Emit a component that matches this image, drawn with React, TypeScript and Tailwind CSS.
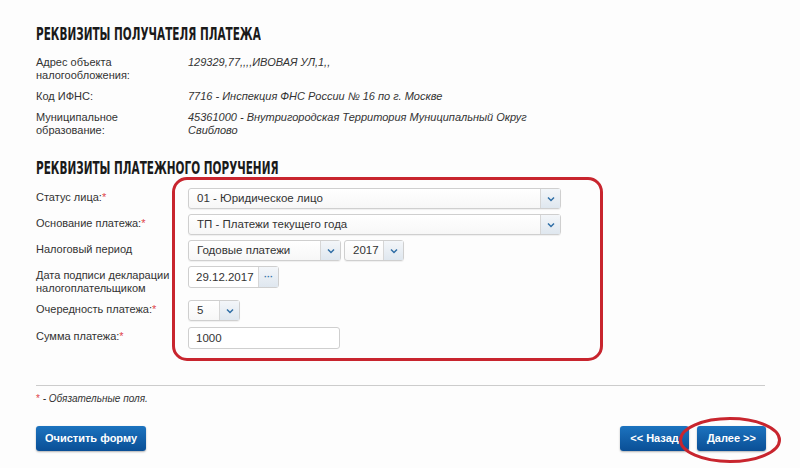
import React from 'react';

const font = { fontFamily: '"Liberation Sans", Arial, sans-serif' };

function Chevron() {
  return (
    <svg width="8" height="6" viewBox="0 0 8 6" fill="none">
      <path d="M1 1.5 L4 4.5 L7 1.5" stroke="#2f6ea6" strokeWidth="1.5" />
    </svg>
  );
}

function Select({ value, width }: { value: string; width: string }) {
  return (
    <div className={`flex h-[21px] ${width} rounded-[3px] border border-[#cfcfcf] bg-gradient-to-b from-white to-[#f7f7f7] shadow-[0_1px_1px_rgba(0,0,0,0.06)]`}>
      <div className="flex-1 truncate pl-[8px] text-[11.5px] leading-[19px] text-[#333]">{value}</div>
      <div className="flex w-[20px] items-center justify-center border-l border-[#d6d6d6] bg-gradient-to-b from-[#f3f6f9] to-[#dfe7ef]">
        <Chevron />
      </div>
    </div>
  );
}

function Label({ children, req }: { children: React.ReactNode; req?: boolean }) {
  return (
    <div className="w-[152px] shrink-0 pt-[3px] pr-2 text-[11px] leading-[13px] text-[#333]">
      {children}
      {req && <span className="text-[#e0454b]">*</span>}
    </div>
  );
}

function Heading({ children }: { children: React.ReactNode }) {
  return (
    <div className="h-[20px] overflow-visible">
      <div
        className="inline-block origin-left scale-x-[0.63] whitespace-nowrap text-[18.5px] font-bold leading-[20px] text-[#1a1a1a]"
        style={{ fontFamily: '"DejaVu Sans Condensed", "DejaVu Sans", sans-serif' }}
      >
        {children}
      </div>
    </div>
  );
}

function BlueButton({ children, width }: { children: React.ReactNode; width: string }) {
  return (
    <button className={`h-[25px] ${width} rounded-[3px] bg-gradient-to-b from-[#1c73bf] to-[#0a4f96] text-[11px] font-bold text-white shadow-[0_1px_2px_rgba(0,0,0,0.3)]`}>
      {children}
    </button>
  );
}

export default function App() {
  const recipient = [
    { label: 'Адрес объекта налогообложения:', value: '129329,77,,,,ИВОВАЯ УЛ,1,,' },
    { label: 'Код ИФНС:', value: '7716 - Инспекция ФНС России № 16 по г. Москве' },
    { label: 'Муниципальное образование:', value: '45361000 - Внутригородская Территория Муниципальный Округ Свиблово' },
  ];

  return (
    <div className="relative h-[468px] w-[800px] overflow-hidden bg-[#fdfdfd] px-[36px] pt-[23px]" style={font}>
      {/* Реквизиты получателя */}
      <Heading>РЕКВИЗИТЫ ПОЛУЧАТЕЛЯ ПЛАТЕЖА</Heading>
      <div className="mt-[13px] space-y-[8px]">
        {recipient.map((r) => (
          <div key={r.label} className="flex text-[11px] leading-[13px] text-[#333]">
            <div className="w-[152px] shrink-0 pr-[40px]">{r.label}</div>
            <div className="w-[340px] italic">{r.value}</div>
          </div>
        ))}
      </div>

      {/* Реквизиты платежного поручения */}
      <div className="mt-[20px]">
        <Heading>РЕКВИЗИТЫ ПЛАТЕЖНОГО ПОРУЧЕНИЯ</Heading>
      </div>
      <div className="mt-[11px] space-y-[5px]">
        <div className="flex">
          <Label req>Статус лица:</Label>
          <Select value="01 - Юридическое лицо" width="w-[373px]" />
        </div>
        <div className="flex">
          <Label req>Основание платежа:</Label>
          <Select value="ТП - Платежи текущего года" width="w-[373px]" />
        </div>
        <div className="flex">
          <Label>Налоговый период</Label>
          <div className="flex gap-[3px]">
            <Select value="Годовые платежи" width="w-[153px]" />
            <Select value="2017" width="w-[60px]" />
          </div>
        </div>
        <div className="flex">
          <Label>Дата подписи декларации налогоплательщиком</Label>
          <div className="flex h-[22px] w-[91px] rounded-[3px] border border-[#cfcfcf] bg-white">
            <div className="flex-1 pl-[7px] text-[11.5px] leading-[20px] text-[#333]">29.12.2017</div>
            <div className="flex w-[20px] items-center justify-center border-l border-[#d6d6d6] bg-gradient-to-b from-[#f3f6f9] to-[#dfe7ef] text-[9px] font-bold leading-none text-[#2f6ea6]">
              ···
            </div>
          </div>
        </div>
        <div className="flex">
          <Label req>Очередность платежа:</Label>
          <div className="h-[22px]">
            <Select value="5" width="w-[52px]" />
          </div>
        </div>
        <div className="flex">
          <Label req>Сумма платежа:</Label>
          <div className="h-[22px] w-[152px] rounded-[3px] border border-[#cfcfcf] bg-white pl-[7px] text-[11.5px] leading-[20px] text-[#333]">
            1000
          </div>
        </div>
      </div>

      {/* Footer */}
      <div className="mt-[36px] h-px w-[729px] bg-[#cccccc]" />
      <div className="mt-[7px] text-[10px] italic leading-[12px] text-[#333]">
        <span className="not-italic text-[#e0454b]">*</span> - Обязательные поля.
      </div>
      <div className="mt-[21px] flex w-[730px] items-center">
        <BlueButton width="w-[110px]">Очистить форму</BlueButton>
        <div className="ml-auto flex gap-[8px]">
          <BlueButton width="w-[69px]">&lt;&lt; Назад</BlueButton>
          <BlueButton width="w-[69px]">Далее &gt;&gt;</BlueButton>
        </div>
      </div>

      {/* Annotations */}
      <div className="pointer-events-none absolute left-[172px] top-[177px] h-[184px] w-[431px] rounded-[15px] border-[3.5px] border-[#c8252e]" />
      <svg className="pointer-events-none absolute left-[678px] top-[416px]" width="104" height="48" viewBox="0 0 104 48">
        <ellipse cx="52" cy="24" rx="49.5" ry="21.5" fill="none" stroke="#c8252e" strokeWidth="3" />
      </svg>
    </div>
  );
}
